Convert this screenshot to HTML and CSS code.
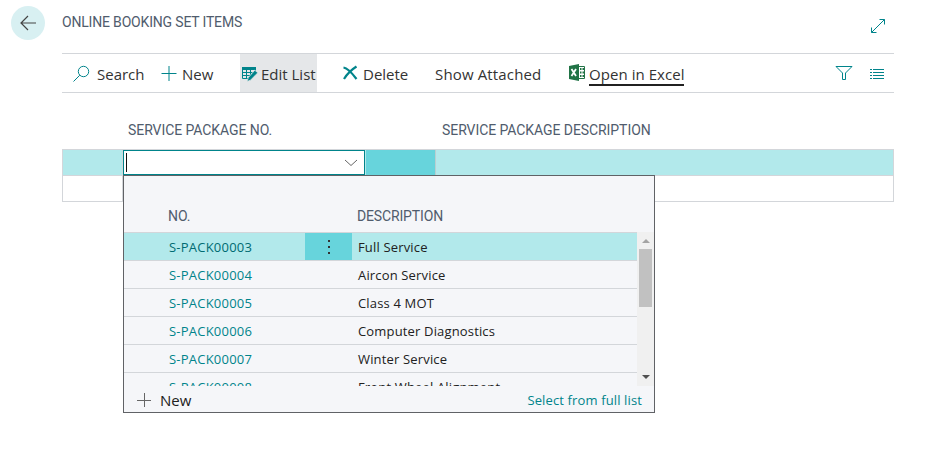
FILE: index.html
```html
<!DOCTYPE html>
<html lang="en">
<head>
<meta charset="utf-8">
<title>Online Booking Set Items</title>
<link rel="stylesheet" href="styles.css">
</head>
<body>
<header class="page-header">
  <button class="back" aria-label="Back"><svg width="18" height="16" viewBox="0 0 18 16"><path d="M17 8H2M9 1L2 8l7 7"/></svg></button>
  <h1 class="caption title">ONLINE BOOKING SET ITEMS</h1>
  <svg class="icon expand" width="16" height="16" viewBox="0 0 16 16"><path d="M1.500 14.500l13-13M9.500 1.500h5v5M1.500 9.500v5h5"/></svg>
</header>
<main class="content">
  <nav class="toolbar">
    <a class="action search"><svg class="icon" width="18" height="18" viewBox="0 0 18 18"><circle cx="11.500" cy="7.500" r="5.200"/><path d="M7.800 11.200L1.500 17.500"/></svg><span>Search</span></a>
    <a class="action new"><svg class="icon" width="16" height="16" viewBox="0 0 16 16"><path d="M.5 8.500h15M8 1v15"/></svg><span>New</span></a>
    <a class="action edit"><svg width="16" height="17" viewBox="0 0 16 17"><path class="solid" d="M0 2h14v3H0z"/><path class="icon" d="M.5 5v8.500h6M0 7.500h11M0 10.500h8M4.500 5v8.500M8.500 5v6M13.500 4v2"/><path class="solid" stroke="#e5e7e9" stroke-width=".8" d="M12.800 5.200l3 2.600-7.300 7.400L5 16.500l1.300-4z"/></svg><span>Edit List</span></a>
    <a class="action delete"><svg width="16" height="16" viewBox="0 0 16 16"><path class="cross" d="M1.500 2.500C5 3 10 8 14.500 14M14.500 1.500C9 5 5 9 2 14"/></svg><span>Delete</span></a>
    <a class="action attached"><span>Show Attached</span></a>
    <a class="action excel"><svg width="17" height="17" viewBox="0 0 17 17"><path fill="#217346" d="M0 2l10-2v17L0 15z"/><path fill="none" stroke="#217346" d="M9 2.500h6.500v12H9"/><path stroke="#217346" stroke-width="2" d="M11 5h1.500M11 8.500h1.500M11 12h1.500M13.500 5H15M13.500 8.500H15M13.500 12H15"/><path fill="none" stroke="#fff" stroke-width="1.800" d="M2.500 5l4.500 7M7 5l-4.500 7"/></svg><span>Open in Excel</span></a>
    <svg class="icon filter" width="18" height="16" viewBox="0 0 18 16"><path d="M1 1.500h16L10.500 8v6.500h-3V8L1 1.500z"/></svg>
    <svg class="icon list" width="15" height="14" viewBox="0 0 15 14"><path d="M0 2.500h2M3 2.500h11M0 5.500h2M3 5.500h11M0 8.500h2M3 8.500h11M0 11.500h2M3 11.500h11"/></svg>
  </nav>
  <div class="grid-head"><span class="caption c-no">SERVICE PACKAGE NO.</span><span class="caption c-desc">SERVICE PACKAGE DESCRIPTION</span></div>
  <section class="grid">
    <div class="grid-row active">
      <div class="cell"></div>
      <div class="field"><i class="caret"></i><svg width="14" height="8" viewBox="0 0 14 8"><path d="M1 1l6 5.500L13 1"/></svg></div>
      <div class="cell gap"></div><div class="cell"></div>
    </div>
    <div class="grid-row"><div class="cell"></div><div></div></div>
    <div class="popup">
      <div class="popup-head"><span class="caption p-no">NO.</span><span class="caption p-desc">DESCRIPTION</span></div>
      <div class="viewport">
        <div class="rows">
          <div class="row selected"><a>S-PACK00003</a><b><svg width="4" height="16" viewBox="0 0 4 16"><path d="M1 1h2v2H1zM1 7h2v2H1zM1 13h2v2H1z"/></svg></b><span>Full Service</span></div>
          <div class="row"><a>S-PACK00004</a><b></b><span>Aircon Service</span></div>
          <div class="row"><a>S-PACK00005</a><b></b><span>Class 4 MOT</span></div>
          <div class="row"><a>S-PACK00006</a><b></b><span>Computer Diagnostics</span></div>
          <div class="row"><a>S-PACK00007</a><b></b><span>Winter Service</span></div>
          <div class="row"><a>S-PACK00008</a><b></b><span>Front Wheel Alignment</span></div>
        </div>
        <div class="scrollbar"><i class="arrow up"></i><i class="thumb"></i><i class="arrow down"></i></div>
      </div>
      <footer class="popup-foot"><a class="foot-new"><svg width="15" height="15" viewBox="0 0 15 15"><path d="M0 7.500h14M7.500 0v14"/></svg><span>New</span></a><a class="select">Select from full list</a></footer>
    </div>
  </section>
</main>
</body>
</html>
```
FILE: styles.css
```css
* { box-sizing: border-box; }
body { margin: 0; width: 941px; height: 449px; overflow: hidden; background: #fff; color: #212121; font: 14px "Open Sans", "Noto Sans", sans-serif; }
svg { display: block; flex: none; }
.caption { margin: 0; font: 400 14px/20px Roboto, sans-serif; letter-spacing: -.07px; color: #505c6d; white-space: nowrap; }
.icon { fill: none; stroke: #00848b; }
.solid { fill: #00848b; }
.cross { fill: none; stroke: #00848b; stroke-width: 2.2; }
.page-header { height: 53px; display: flex; align-items: flex-start; padding: 6px 55px 0 11px; }
.back { width: 34px; height: 34px; border: 0; border-radius: 50%; background: #d8f0f2; padding: 0; display: flex; align-items: center; justify-content: center; }
.back svg { fill: none; stroke: #444; stroke-width: 1.2; }
.title { margin: 6px auto 0 17px; letter-spacing: -.18px; }
.expand { margin-top: 12px; }
.content { width: 832px; margin-left: 62px; }
.toolbar { display: flex; height: 40px; border: solid #d3d6da; border-width: 1px 0; align-items: center; }
.action { display: flex; align-items: center; height: 38px; font-size: 15px; line-height: 20px; white-space: nowrap; color: #333; }
.action span { margin-top: 2px; }
.search { width: 89px; padding-left: 10px; gap: 7px; }
.new { width: 89px; padding-left: 10px; gap: 5px; }
.edit { width: 77px; padding-left: 2px; gap: 3px; background: #e5e7e9; }
.delete { width: 118px; padding-left: 25px; gap: 5px; }
.attached { width: 134px; letter-spacing: .15px; }
.excel { gap: 3px; }
.excel svg { margin-top: -2px; }
.excel span { border-bottom: 2px solid #212121; margin-top: 4px; height: 22px; width: 95px; letter-spacing: .06px; }
.filter { margin-left: auto; }
.list { margin: 2px 9px 0 17px; }
.grid-head { height: 56px; padding: 27px 0 0 66px; display: flex; }
.c-no { width: 314px; }
.grid { position: relative; border: 1px solid #d3d6da; height: 53px; }
.grid-row { display: grid; grid-template-columns: 60px 242px 71px 1fr; height: 26px; border-bottom: 1px solid #d3d6da; }
.grid-row + .grid-row { height: 25px; border: 0; }
.grid-row .cell:first-child { border-right: 1px solid #d3d6da; }
.active .cell { background: #b2e9eb; }
.active .gap { background: #67d4dc; border-left: 1px solid #b2e9eb; border-right: 1px solid #b9cfd1; }
.field { border: 1px solid #00848b; background: #fff; display: flex; align-items: center; justify-content: space-between; padding: 0 6px 0 2px; }
.field svg { fill: none; stroke: #666; }
.caret { width: 1px; height: 19px; background: #111; }
.popup { position: absolute; left: 60px; top: 25px; width: 532px; height: 238px; background: #f5f6f9; border: 1px solid #606266; }
.popup-head { height: 56px; padding: 30px 0 0 44px; display: flex; }
.p-no { width: 189px; }
.p-desc { letter-spacing: -.15px; }
.viewport { display: flex; height: 154px; overflow: hidden; }
.rows { width: 513px; border-top: 1px solid #d3d6da; }
.row { height: 28px; display: grid; grid-template: 27px / 181px 47px 1fr; border-bottom: 1px solid #d3d6da; line-height: 29px; white-space: nowrap; font-size: 13px; letter-spacing: .16px; }
.row a { padding-left: 45px; color: #00848b; letter-spacing: .22px; }
.row span { padding-left: 6px; }
.selected { background: #b2e9eb; }
.selected b { background: #67d4dc; display: flex; align-items: center; justify-content: center; }
.selected svg { fill: #333; }
.selected a { color: #006b72; }
.scrollbar { width: 17px; background: #f0f0f0; display: flex; flex-direction: column; align-items: center; padding: 7px 0 7px; }
.arrow { border: 4px solid transparent; border-top: 0; border-bottom-color: #a3a3a3; }
.thumb { width: 13px; height: 58px; margin-top: 6px; background: #c1c1c1; }
.down { margin-top: auto; border: 4px solid transparent; border-bottom: 0; border-top-color: #505050; }
.popup-foot { display: flex; justify-content: space-between; padding: 4px 12px 0 13px; line-height: 20px; }
.foot-new { display: flex; gap: 8px; font-size: 15px; align-items: center; }
.foot-new svg { stroke: #666; }
.select { color: #00848b; font-size: 13px; letter-spacing: .13px; }
```
